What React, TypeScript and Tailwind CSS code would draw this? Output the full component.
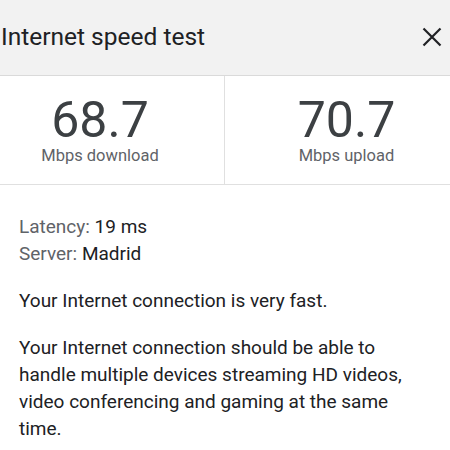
import React from "react";

export default function App() {
  return (
    <div className="w-[450px] h-[450px] overflow-hidden bg-white" style={{ fontFamily: "Roboto, 'Noto Sans', sans-serif" }}>
      <div className="h-[76px] bg-[#f2f2f2] flex items-center justify-between border-b border-[#dadada]">
        <div className="text-[24.5px] text-[#202124] leading-none pl-px -mt-[1px]">Internet speed test</div>
        <svg width="20" height="20" viewBox="0 0 20 20" className="mr-[8px] -mt-[1px]">
          <path d="M1.5 1.5 L18.5 18.5 M18.5 1.5 L1.5 18.5" stroke="#202124" strokeWidth="2.2" fill="none" />
        </svg>
      </div>
      <div className="flex h-[109px] border-b border-[#e0e0e0]">
        <div className="w-[224px] shrink-0 pr-[24px] flex flex-col items-center justify-center">
          <div className="text-[50px] leading-[46px] text-[#3c4043] pt-[3px]">68.7</div>
          <div className="text-[16.5px] leading-[20px] text-[#5f6368] mt-[3px]">Mbps download</div>
        </div>
        <div className="w-[244px] shrink-0 border-l border-[#e0e0e0] flex flex-col items-center justify-center">
          <div className="text-[50px] leading-[46px] text-[#3c4043] pt-[3px]">70.7</div>
          <div className="text-[16.5px] leading-[20px] text-[#5f6368] mt-[3px]">Mbps upload</div>
        </div>
      </div>
      <div className="w-[420px] pl-[19px] pt-[28px] text-[19px] leading-[27px] text-[#202124]">
        <div><span className="text-[#5f6368]">Latency:</span> 19 ms</div>
        <div><span className="text-[#5f6368]">Server:</span> Madrid</div>
        <p className="mt-[20px]">Your Internet connection is very fast.</p>
        <p className="mt-[20px]">Your Internet connection should be able to handle multiple devices streaming HD videos, video conferencing and gaming at the same time.</p>
      </div>
    </div>
  );
}
